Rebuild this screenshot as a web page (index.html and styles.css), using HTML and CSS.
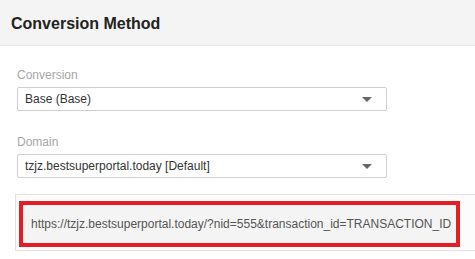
FILE: index.html
```html
<!DOCTYPE html>
<html lang="en">
<head>
    <meta charset="UTF-8">
    <meta name="viewport" content="width=device-width, initial-scale=1.0">
    <title>Conversion Method</title>
    <link rel="stylesheet" href="styles.css">
</head>
<body>

    <div class="panel">
        <div class="panel-head">
            <h2>Conversion Method</h2>
        </div>

        <div class="panel-body">
            <label class="field-label">Conversion</label>
            <div class="select">
                <span>Base (Base)</span>
                <span class="caret"></span>
            </div>

            <label class="field-label second">Domain</label>
            <div class="select">
                <span>tzjz.bestsuperportal.today [Default]</span>
                <span class="caret"></span>
            </div>

            <div class="url-box">
                <div class="url-field">https://tzjz.bestsuperportal.today/?nid=555&amp;transaction_id=TRANSACTION_ID</div>
            </div>
        </div>
    </div>

</body>
</html>
```

FILE: styles.css
```css
body {
    margin: 0;
    font-family: "Liberation Sans", Arial, sans-serif;
    background: #fff;
    overflow: hidden;
}
.panel-head {
    height: 46px;
    background: #f4f4f4;
    border-bottom: 1px solid #e6e6e6;
    padding: 0 11px;
    box-sizing: border-box;
    display: flex;
    align-items: center;
}
.panel-head h2 {
    margin: 0;
    font-size: 16px;
    font-weight: bold;
    color: #222;
    padding-top: 2px;
}
.panel-body {
    padding: 22px 0 0 17px;
}
.field-label {
    display: block;
    font-size: 12px;
    line-height: 15px;
    color: #a6a6a6;
    margin-bottom: 4px;
}
.field-label.second {
    margin-top: 24px;
}
.select {
    width: 370px;
    height: 24px;
    box-sizing: border-box;
    border: 1px solid #cfcfcf;
    border-radius: 2px;
    display: flex;
    align-items: center;
    justify-content: space-between;
    padding: 0 14px 0 7px;
    font-size: 12px;
    color: #333;
}
.caret {
    width: 0;
    height: 0;
    border-left: 5px solid transparent;
    border-right: 5px solid transparent;
    border-top: 5px solid #666;
}
.url-box {
    margin: 16px -10px 0 -2px;
    border: 1px solid #e0e0e0;
    border-right: none;
    background: #fcfcfc;
    padding: 6px 0 3px 3px;
}
.url-field {
    width: 441px;
    height: 46px;
    box-sizing: border-box;
    border: 4px solid #e31e24;
    background: #f4f4f4;
    font-size: 12px;
    color: #555;
    display: flex;
    align-items: center;
    padding-left: 8px;
    white-space: nowrap;
}
```
